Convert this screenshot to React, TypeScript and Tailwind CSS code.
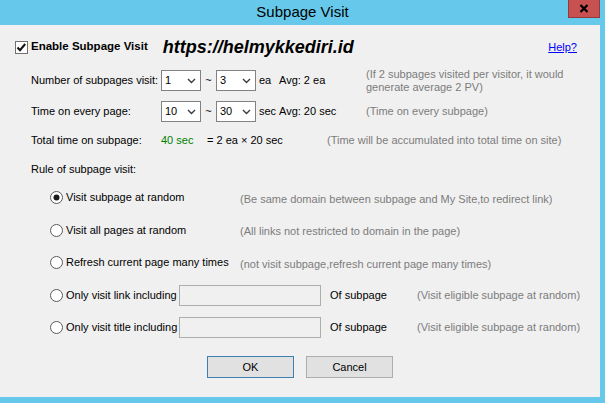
import React from "react";

const font = { fontFamily: '"Liberation Sans", Arial, sans-serif' };

// Combo box with a value and a drop arrow
const Combo = ({ value }: { value: string }) => (
  <div className="flex h-[21px] w-[40px] items-center justify-between border border-[#828282] bg-white pl-[3px] pr-[4px] text-[11px] text-black">
    <span>{value}</span>
    <svg width="9" height="6" viewBox="0 0 9 6">
      <path d="M1 1 L4.5 4.5 L8 1" fill="none" stroke="#3c3c3c" strokeWidth="1.4" />
    </svg>
  </div>
);

const Radio = ({ checked }: { checked?: boolean }) => (
  <svg width="13" height="13" viewBox="0 0 13 13" className="shrink-0">
    <circle cx="6.5" cy="6.5" r="6" fill="#ffffff" stroke="#5a5a5a" strokeWidth="1" />
    {checked && <circle cx="6.5" cy="6.5" r="3" fill="#1a1a1a" />}
  </svg>
);

const Note = ({ children }: { children: React.ReactNode }) => (
  <span className="text-[11px] text-[#7c7c7c]">{children}</span>
);

const RuleRow = ({
  label,
  checked,
  children,
}: {
  label: string;
  checked?: boolean;
  children?: React.ReactNode;
}) => (
  <div className="flex h-[21px] items-center">
    <Radio checked={checked} />
    <span className="ml-[3px] text-[11px] text-black">{label}</span>
    {children}
  </div>
);

export default function App() {
  return (
    <div className="flex h-[403px] w-[605px] flex-col bg-[#66c9eb]" style={font}>
      {/* title bar */}
      <div className="relative flex h-[25px] shrink-0 items-center justify-center">
        <span className="text-[15px] text-black">Subpage Visit</span>
        <div className="absolute right-[5px] top-0 flex h-[18px] w-[32px] items-center justify-center border border-t-0 border-[#8e3b3b] bg-[#c75050]">
          <svg width="10" height="9" viewBox="0 0 10 9">
            <path d="M1.5 1 L8.5 8 M8.5 1 L1.5 8" stroke="#000" strokeWidth="2.2" />
          </svg>
        </div>
      </div>

      {/* client area */}
      <div className="mb-[6px] mr-[5px] flex flex-1 flex-col bg-[#f0f0f0] pl-[15px] pt-[11px]">
        {/* header */}
        <div className="flex h-[22px] items-center">
          <svg width="13" height="13" viewBox="0 0 13 13" className="shrink-0">
            <rect x="0.5" y="0.5" width="12" height="12" fill="#fff" stroke="#707070" />
            <path d="M2.5 6.5 L5 9.2 L10.2 3" fill="none" stroke="#111" strokeWidth="2" />
          </svg>
          <span className="ml-[3px] text-[11.5px] font-bold text-black">Enable Subpage Visit</span>
          <span className="ml-[15px] mt-[1px] text-[18px] font-bold italic text-black">https://helmykkediri.id</span>
          <a className="ml-auto mr-[23px] text-[11px] text-[#0000ff] underline" href="#">
            Help?
          </a>
        </div>

        <div className="flex flex-col pl-[16px]">
          {/* subpage count */}
          <div className="mt-[12px] flex items-start">
            <div className="flex h-[21px] items-center">
              <span className="w-[130px] text-[11px] text-black">Number of subpages visit:</span>
              <Combo value="1" />
              <span className="w-[15px] text-center text-[11px] text-black">~</span>
              <Combo value="3" />
              <span className="ml-[3px] w-[20px] text-[11px] text-black">ea</span>
              <span className="w-[87px] text-[11px] text-black">Avg: 2 ea</span>
            </div>
            <div className="mt-[-2px] flex flex-col text-[11px] leading-[13px] text-[#7c7c7c]">
              <span>(If 2 subpages visited per visitor, it would</span>
              <span>generate average 2 PV)</span>
            </div>
          </div>

          {/* time per page */}
          <div className="mt-[7px] flex h-[21px] items-center">
            <span className="w-[130px] text-[11px] text-black">Time on every page:</span>
            <Combo value="10" />
            <span className="w-[15px] text-center text-[11px] text-black">~</span>
            <Combo value="30" />
            <span className="ml-[3px] w-[20px] text-[11px] text-black">sec</span>
            <span className="w-[87px] text-[11px] text-black">Avg: 20 sec</span>
            <Note>(Time on every subpage)</Note>
          </div>

          {/* total */}
          <div className="mt-[8px] flex h-[20px] items-center text-[11px]">
            <span className="w-[130px] text-black">Total time on subpage:</span>
            <span className="w-[46px] text-[#008000]">40 sec</span>
            <span className="w-[120px] text-black">= 2 ea × 20 sec</span>
            <Note>(Time will be accumulated into total time on site)</Note>
          </div>

          <div className="mt-[9px] flex h-[20px] items-center text-[11px] text-black">Rule of subpage visit:</div>

          {/* rules */}
          <div className="ml-[19px] mt-[8px] flex flex-col gap-[11.5px]">
            <RuleRow label="Visit subpage at random" checked>
              <span className="ml-auto w-[360px]">
                <Note>(Be same domain between subpage and My Site,to redirect link)</Note>
              </span>
            </RuleRow>
            <RuleRow label="Visit all pages at random">
              <span className="ml-auto w-[360px]">
                <Note>(All links not restricted to domain in the page)</Note>
              </span>
            </RuleRow>
            <RuleRow label="Refresh current page many times">
              <span className="ml-auto w-[360px]">
                <Note>(not visit subpage,refresh current page many times)</Note>
              </span>
            </RuleRow>
            <RuleRow label="Only visit link including">
              <div className="ml-auto flex w-[421px] items-center">
                <div className="h-[21px] w-[142px] border border-[#adadad] bg-[#f0f0f0]" />
                <span className="ml-[9px] w-[87px] text-[11px] text-black">Of subpage</span>
                <Note>(Visit eligible subpage at random)</Note>
              </div>
            </RuleRow>
            <RuleRow label="Only visit title including">
              <div className="ml-auto flex w-[421px] items-center">
                <div className="h-[21px] w-[142px] border border-[#adadad] bg-[#f0f0f0]" />
                <span className="ml-[9px] w-[87px] text-[11px] text-black">Of subpage</span>
                <Note>(Visit eligible subpage at random)</Note>
              </div>
            </RuleRow>
          </div>
        </div>

        {/* buttons */}
        <div className="mr-[15px] mt-[18px] flex justify-center gap-[12px]">
          <button className="h-[22px] w-[87px] border border-[#3c7fb1] bg-[#e1e1e1] text-[11px] text-black">OK</button>
          <button className="h-[22px] w-[87px] border border-[#adadad] bg-[#e1e1e1] text-[11px] text-black">Cancel</button>
        </div>
      </div>
    </div>
  );
}
